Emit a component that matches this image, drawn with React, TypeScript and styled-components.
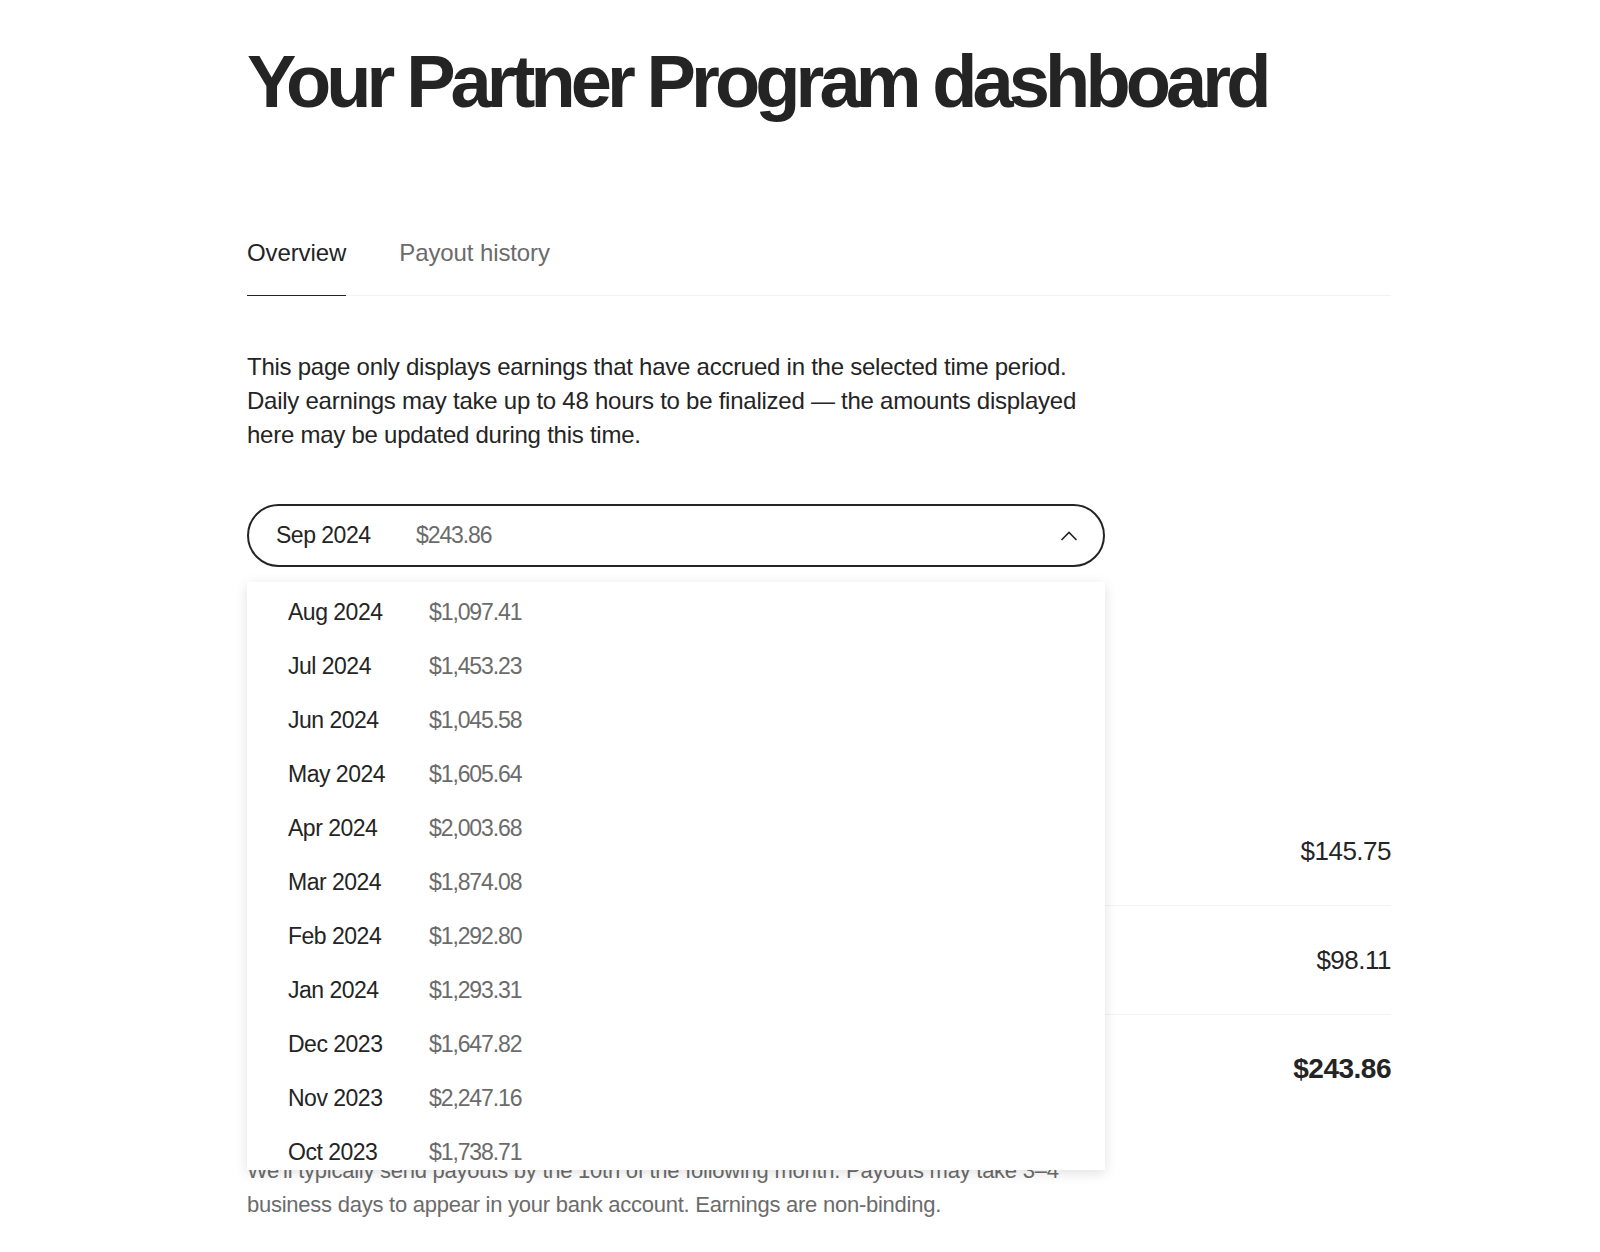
import React, { useState } from 'react';
import styled, { createGlobalStyle } from 'styled-components';

const GlobalStyle = createGlobalStyle`
  html, body {
    margin: 0;
    padding: 0;
    background: #ffffff;
  }
  body {
    font-family: 'Liberation Sans', Arial, sans-serif;
    color: #242424;
  }
`;

type Month = { label: string; amount: string };

const months: Month[] = [
  { label: 'Aug 2024', amount: '$1,097.41' },
  { label: 'Jul 2024', amount: '$1,453.23' },
  { label: 'Jun 2024', amount: '$1,045.58' },
  { label: 'May 2024', amount: '$1,605.64' },
  { label: 'Apr 2024', amount: '$2,003.68' },
  { label: 'Mar 2024', amount: '$1,874.08' },
  { label: 'Feb 2024', amount: '$1,292.80' },
  { label: 'Jan 2024', amount: '$1,293.31' },
  { label: 'Dec 2023', amount: '$1,647.82' },
  { label: 'Nov 2023', amount: '$2,247.16' },
  { label: 'Oct 2023', amount: '$1,738.71' },
  { label: 'Sep 2023', amount: '$1,512.40' },
];

const summary = [
  { label: 'Member reading time', value: '$145.75', total: false },
  { label: 'Member referrals', value: '$98.11', total: false },
  { label: 'Total earnings', value: '$243.86', total: true },
];

export default function App() {
  const [open, setOpen] = useState(true);

  return (
    <>
      <GlobalStyle />
      <Page>
        <Title>Your Partner Program dashboard</Title>
        <Tabs>
          <Tab active>Overview</Tab>
          <Tab>Payout history</Tab>
        </Tabs>
        <Intro>
          This page only displays earnings that have accrued in the selected time period.
          Daily earnings may take up to 48 hours to be finalized — the amounts displayed
          here may be updated during this time.
        </Intro>
        <Picker>
          <PickerButton onClick={() => setOpen(!open)}>
            <MonthLabel>Sep 2024</MonthLabel>
            <MonthAmount>$243.86</MonthAmount>
            <Chevron viewBox="0 0 20 20" open={open}>
              <path d="M2.5 14 L10 6.5 L17.5 14" fill="none" stroke="#242424" strokeWidth="1.6" />
            </Chevron>
          </PickerButton>
          {open && (
            <Menu>
              {months.map((m) => (
                <MenuItem key={m.label}>
                  <MenuMonth>{m.label}</MenuMonth>
                  <MenuAmount>{m.amount}</MenuAmount>
                </MenuItem>
              ))}
            </Menu>
          )}
        </Picker>
        <Summary>
          <SummaryHeading>Earnings summary</SummaryHeading>
          {summary.map((s) => (
            <SummaryRow key={s.label} total={s.total}>
              <span>{s.label}</span>
              <span>{s.value}</span>
            </SummaryRow>
          ))}
        </Summary>
        <Footnote>
          We'll typically send payouts by the 10th of the following month. Payouts may take 3–4
          business days to appear in your bank account. Earnings are non-binding.
        </Footnote>
      </Page>
    </>
  );
}

const Page = styled.div`
  width: 1144px;
  margin: 0 0 0 247px;
  padding-top: 40px;
  padding-bottom: 40px;
`;

const Title = styled.h1`
  margin: 0;
  font-size: 74px;
  line-height: 84px;
  font-weight: 700;
  letter-spacing: -4.9px;
  color: #242424;
`;

const Tabs = styled.div`
  display: flex;
  gap: 53px;
  margin-top: 114px;
  border-bottom: 1px solid #f2f2f2;
`;

const Tab = styled.div<{ active?: boolean }>`
  font-size: 24px;
  line-height: 30px;
  padding: 0 0 27px;
  letter-spacing: -0.1px;
  color: ${(p) => (p.active ? '#242424' : '#6b6b6b')};
  border-bottom: 1px solid ${(p) => (p.active ? '#242424' : 'transparent')};
  margin-bottom: -1px;
`;

const Intro = styled.p`
  width: 840px;
  margin: 54px 0 0;
  font-size: 24px;
  line-height: 34px;
  letter-spacing: -0.25px;
  color: #242424;
`;

const Picker = styled.div`
  position: relative;
  width: 858px;
  margin-top: 52px;
`;

const PickerButton = styled.button`
  display: flex;
  align-items: center;
  width: 100%;
  height: 63px;
  padding: 0 24px 0 27px;
  border: 2px solid #242424;
  border-radius: 32px;
  background: #ffffff;
  font-family: inherit;
  cursor: pointer;
  box-sizing: border-box;
`;

const MonthLabel = styled.span`
  width: 140px;
  text-align: left;
  font-size: 23px;
  letter-spacing: -0.5px;
  color: #242424;
`;

const MonthAmount = styled.span`
  flex: 1;
  text-align: left;
  font-size: 23px;
  letter-spacing: -1.1px;
  color: #6b6b6b;
`;

const Chevron = styled.svg<{ open: boolean }>`
  width: 20px;
  height: 20px;
  transform: ${(p) => (p.open ? 'none' : 'rotate(180deg)')};
`;

const Menu = styled.div`
  position: absolute;
  top: 78px;
  left: 0;
  right: 0;
  height: 588px;
  padding-top: 3px;
  overflow: hidden;
  background: #ffffff;
  box-shadow: 0 3px 12px rgba(0, 0, 0, 0.12);
  z-index: 5;
  box-sizing: border-box;
`;

const MenuItem = styled.div`
  display: flex;
  align-items: center;
  height: 54px;
  padding-left: 41px;
`;

const MenuMonth = styled.span`
  width: 141px;
  font-size: 23px;
  letter-spacing: -0.5px;
  color: #242424;
`;

const MenuAmount = styled.span`
  font-size: 23px;
  letter-spacing: -1.1px;
  color: #6b6b6b;
`;

const Summary = styled.div`
  margin-top: 130px;
`;

const SummaryHeading = styled.h2`
  margin: 0 0 70px;
  font-size: 24px;
  line-height: 30px;
  font-weight: 700;
`;

const SummaryRow = styled.div<{ total: boolean }>`
  display: flex;
  justify-content: space-between;
  align-items: center;
  height: 108px;
  font-size: ${(p) => (p.total ? '28px' : '26px')};
  letter-spacing: -0.5px;
  font-weight: ${(p) => (p.total ? 700 : 400)};
  border-bottom: 1px solid ${(p) => (p.total ? 'transparent' : '#f2f2f2')};
`;

const Footnote = styled.p`
  width: 880px;
  margin: 30px 0 0;
  font-size: 22px;
  line-height: 34px;
  letter-spacing: -0.25px;
  color: #6b6b6b;
`;
